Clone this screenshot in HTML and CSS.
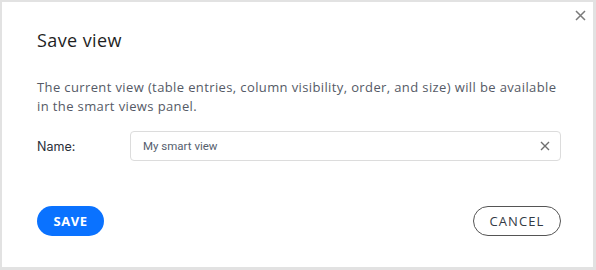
FILE: index.html
```html
<!DOCTYPE html>
<html lang="en">
<head>
<meta charset="utf-8">
<title>Save view</title>
<link rel="stylesheet" href="styles.css">
</head>
<body>
<div class="dialog">
  <button class="close" aria-label="Close">
    <svg width="11" height="11" viewBox="0 0 11 11"><path d="M1 1L10 10M10 1L1 10" stroke="#7a7a7a" stroke-width="1.5" fill="none"/></svg>
  </button>
  <h1 class="title">Save view</h1>
  <p class="desc">The current view (table entries, column visibility, order, and size) will be available in the smart views panel.</p>
  <div class="row">
    <label class="label">Name:</label>
    <div class="field">
      <span class="value">My smart view</span>
      <svg class="clear" width="10" height="10" viewBox="0 0 10 10"><path d="M1 1L9 9M9 1L1 9" stroke="#6f6f6f" stroke-width="1.4" fill="none"/></svg>
    </div>
  </div>
  <div class="actions">
    <button class="btn save">SAVE</button>
    <button class="btn cancel">CANCEL</button>
  </div>
</div>
</body>
</html>
```
FILE: styles.css
```css
html, body {
  margin: 0;
  padding: 0;
  background: #e2e2e2;
}
body {
  width: 596px;
  height: 270px;
  padding: 2px 3px 3px 2px;
  box-sizing: border-box;
}
.dialog {
  position: relative;
  background: #fff;
  height: 265px;
  box-sizing: border-box;
  padding: 26px 32px 0 35px;
  font-family: "Open Sans", sans-serif;
}
.close {
  position: absolute;
  top: 8px;
  right: 7px;
  border: 0;
  background: none;
  padding: 0;
  width: 11px;
  height: 11px;
  display: flex;
}
.title {
  margin: 0;
  font-size: 18px;
  line-height: 24px;
  font-weight: 500;
  letter-spacing: 0.4px;
  color: #1f1f1f;
}
.desc {
  margin: 26px 0 0 0;
  font-size: 13px;
  line-height: 19px;
  letter-spacing: 0.38px;
  color: #555a66;
}
.row {
  display: flex;
  align-items: center;
  margin-top: 15px;
}
.label {
  width: 93px;
  font-family: Inter, sans-serif;
  font-size: 12.5px;
  color: #2a2f3a;
}
.field {
  flex: 1;
  height: 30px;
  box-sizing: border-box;
  border: 1px solid #dcdcdc;
  border-radius: 4px;
  display: flex;
  align-items: center;
  justify-content: space-between;
  padding: 0 10px 0 12px;
}
.value {
  font-family: Roboto, sans-serif;
  font-size: 11.5px;
  color: #555e6e;
}
.actions {
  display: flex;
  justify-content: space-between;
  margin-top: 45px;
}
.btn {
  height: 30px;
  border-radius: 15px;
  font-family: "Open Sans", sans-serif;
  font-size: 13px;
  padding: 0;
  box-sizing: border-box;
}
.save {
  width: 67px;
  background: #0a72ff;
  color: #fff;
  border: 0;
  font-weight: 700;
  letter-spacing: 0.5px;
}
.cancel {
  width: 88px;
  background: #fff;
  color: #333a45;
  border: 1px solid #555;
  font-weight: 500;
  letter-spacing: 1.1px;
}
```
